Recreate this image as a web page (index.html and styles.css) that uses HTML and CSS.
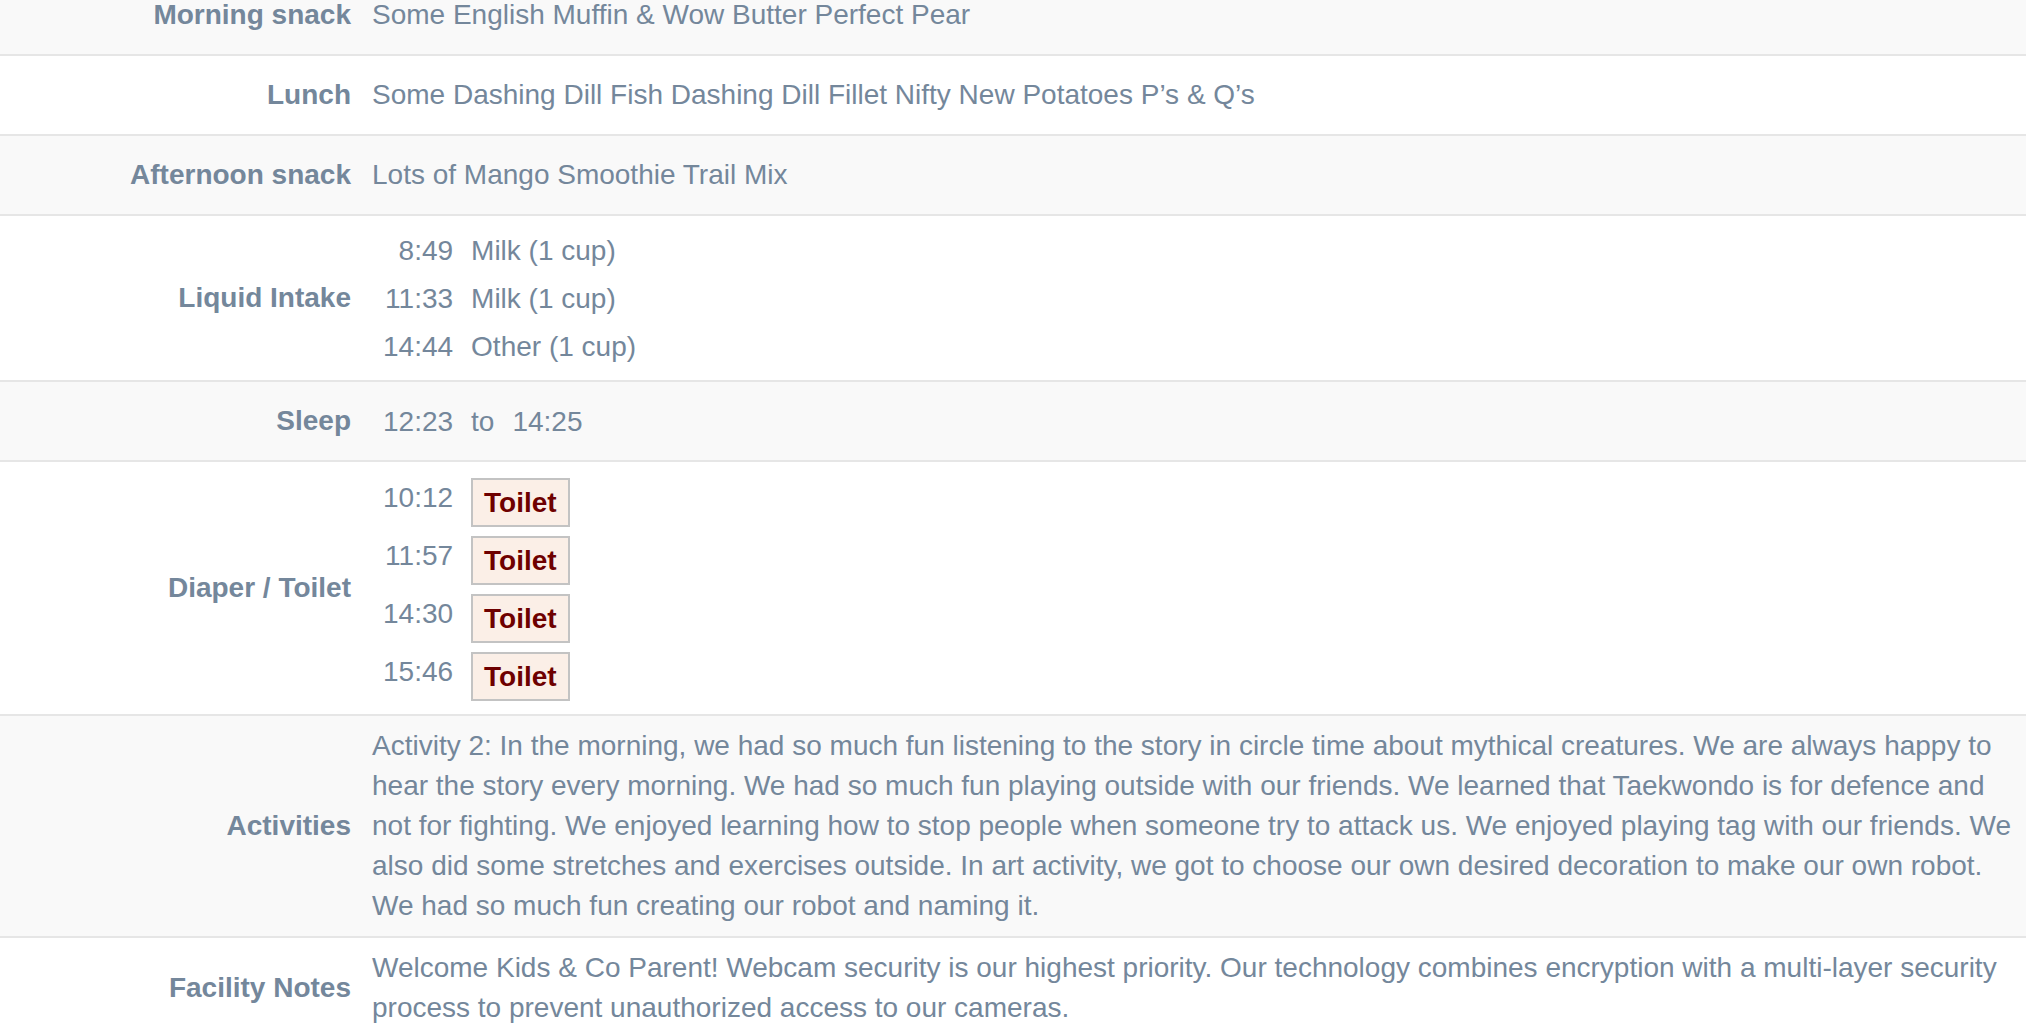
FILE: index.html
```html
<!DOCTYPE html>
<html lang="en">
<head>
    <meta charset="UTF-8">
    <meta name="viewport" content="width=device-width, initial-scale=1.0">
    <title>Daily Report</title>
    <link rel="stylesheet" href="styles.css">
</head>
<body>
    <div class="report">
        <table class="day-table">
            <tr class="shaded">
                <th>Morning snack</th>
                <td>Some English Muffin &amp; Wow Butter Perfect Pear</td>
            </tr>
            <tr>
                <th>Lunch</th>
                <td>Some Dashing Dill Fish Dashing Dill Fillet Nifty New Potatoes P’s &amp; Q’s</td>
            </tr>
            <tr class="shaded">
                <th>Afternoon snack</th>
                <td>Lots of Mango Smoothie Trail Mix</td>
            </tr>
            <tr>
                <th>Liquid Intake</th>
                <td>
                    <table class="entries">
                        <tr><td class="time">8:49</td><td>Milk (1 cup)</td></tr>
                        <tr><td class="time">11:33</td><td>Milk (1 cup)</td></tr>
                        <tr><td class="time">14:44</td><td>Other (1 cup)</td></tr>
                    </table>
                </td>
            </tr>
            <tr class="shaded">
                <th>Sleep</th>
                <td>
                    <table class="entries">
                        <tr><td class="time">12:23</td><td>to</td><td>14:25</td></tr>
                    </table>
                </td>
            </tr>
            <tr>
                <th>Diaper / Toilet</th>
                <td>
                    <table class="entries toilet">
                        <tr><td class="time">10:12</td><td><span class="badge">Toilet</span></td></tr>
                        <tr><td class="time">11:57</td><td><span class="badge">Toilet</span></td></tr>
                        <tr><td class="time">14:30</td><td><span class="badge">Toilet</span></td></tr>
                        <tr><td class="time">15:46</td><td><span class="badge">Toilet</span></td></tr>
                    </table>
                </td>
            </tr>
            <tr class="shaded">
                <th>Activities</th>
                <td>Activity 2: In the morning, we had so much fun listening to the story in circle time about mythical creatures. We are always happy to hear the story every morning. We had so much fun playing outside with our friends. We learned that Taekwondo is for defence and not for fighting. We enjoyed learning how to stop people when someone try to attack us. We enjoyed playing tag with our friends. We also did some stretches and exercises outside. In art activity, we got to choose our own desired decoration to make our own robot. We had so much fun creating our robot and naming it.</td>
            </tr>
            <tr>
                <th>Facility Notes</th>
                <td>Welcome Kids &amp; Co Parent! Webcam security is our highest priority. Our technology combines encryption with a multi-layer security process to prevent unauthorized access to our cameras.</td>
            </tr>
        </table>
    </div>
</body>
</html>
```

FILE: styles.css
```css
body {
    margin: 0;
    background-color: white;
    font-family: "Liberation Sans", Arial, sans-serif;
    font-size: 28px;
    color: #74879b;
    overflow: hidden;
}
.report {
    padding-right: 12px;
    margin-top: -26px;
}
.day-table {
    width: 100%;
    border-collapse: collapse;
}
.day-table > tbody > tr > th,
.day-table > tbody > tr > td {
    border-top: 2px solid #e6e6e6;
    line-height: 40px;
    vertical-align: middle;
}
.day-table > tbody > tr > th {
    width: 351px;
    padding: 19px 10px 19px 0;
    text-align: right;
    font-weight: bold;
}
.day-table > tbody > tr > td {
    padding: 10px 10px 10px 11px;
    text-align: left;
}
.shaded {
    background-color: #f9f9f9;
}
.entries {
    border-collapse: collapse;
    margin-left: 2px;
}
.entries td {
    padding: 5px 9px 3px;
    line-height: 40px;
    vertical-align: top;
}
.entries .time {
    text-align: right;
}
.toilet td {
    padding-top: 6px;
    padding-bottom: 3px;
}
.badge {
    display: inline-block;
    vertical-align: top;
    padding: 2px 11px;
    line-height: 41px;
    border: 2px solid #c3c3c3;
    background-color: #fbefe7;
    color: #6e0000;
    font-weight: bold;
}
```
